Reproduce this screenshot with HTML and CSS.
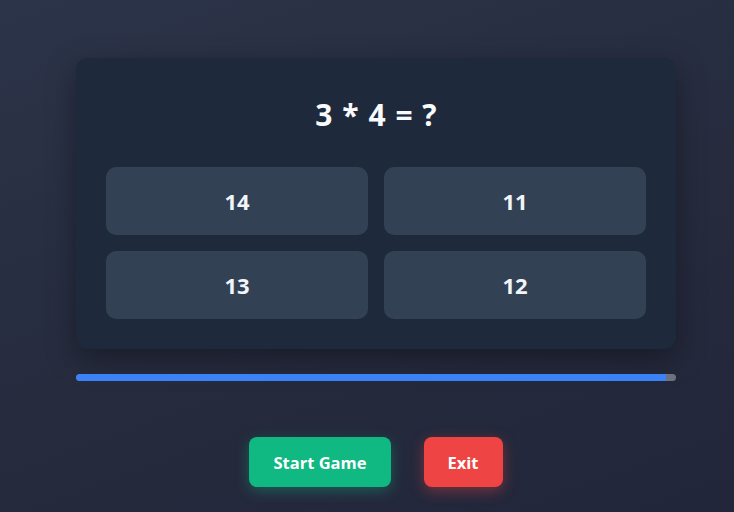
FILE: index.html
```html
<!DOCTYPE html>
<html lang="en">
<head>
<meta charset="utf-8">
<title>Math Quiz</title>
<link rel="stylesheet" href="styles.css">
</head>
<body>
<main class="game">
  <section class="card">
    <h1 class="question">3 * 4 = ?</h1>
    <div class="options">
      <button class="option">14</button>
      <button class="option">11</button>
      <button class="option">13</button>
      <button class="option">12</button>
    </div>
  </section>
  <div class="progress"><div class="progress-fill" style="width: 98.3%"></div></div>
  <div class="controls">
    <button class="btn btn-start">Start Game</button>
    <button class="btn btn-exit">Exit</button>
  </div>
</main>
</body>
</html>
```

FILE: styles.css
```css
html, body {
  margin: 0;
  height: 100%;
}
body {
  background: linear-gradient(160deg, #2c3449 0%, #262b3e 55%, #22263a 100%);
  font-family: "Open Sans", "Noto Sans", sans-serif;
  color: #f1f5f9;
  overflow: hidden;
}
.game {
  width: 600px;
  margin-left: 76px;
  padding-top: 58px;
}
.card {
  background: #1e293b;
  border-radius: 12px;
  padding: 37px 30px 30px 30px;
  box-shadow: 0 10px 30px rgba(0, 0, 0, 0.35);
}
.question {
  margin: 0 0 32px 0;
  text-align: center;
  font-size: 30px;
  font-weight: 700;
  line-height: 40px;
  word-spacing: 2px;
  color: #f8fafc;
}
.options {
  display: grid;
  grid-template-columns: 1fr 1fr;
  gap: 16px 16px;
}
.option {
  background: #334155;
  border: none;
  border-radius: 10px;
  height: 68px;
  font-family: inherit;
  font-size: 22px;
  font-weight: 700;
  color: #f1f5f9;
}
.progress {
  margin-top: 25px;
  height: 7px;
  background: #6b7280;
  border-radius: 4px;
  overflow: hidden;
}
.progress-fill {
  height: 100%;
  background: #3b82f6;
  border-radius: 4px 0 0 4px;
}
.controls {
  display: flex;
  justify-content: center;
  gap: 33px;
  margin-top: 56px;
}
.btn {
  border: none;
  border-radius: 8px;
  height: 50px;
  padding: 0 24px;
  font-family: inherit;
  font-size: 16.5px;
  font-weight: 700;
  color: #ffffff;
}
.btn-start {
  background: #10b981;
  box-shadow: 0 4px 14px rgba(16, 185, 129, 0.35);
}
.btn-exit {
  background: #ef4444;
  box-shadow: 0 4px 14px rgba(239, 68, 68, 0.4);
}
```
